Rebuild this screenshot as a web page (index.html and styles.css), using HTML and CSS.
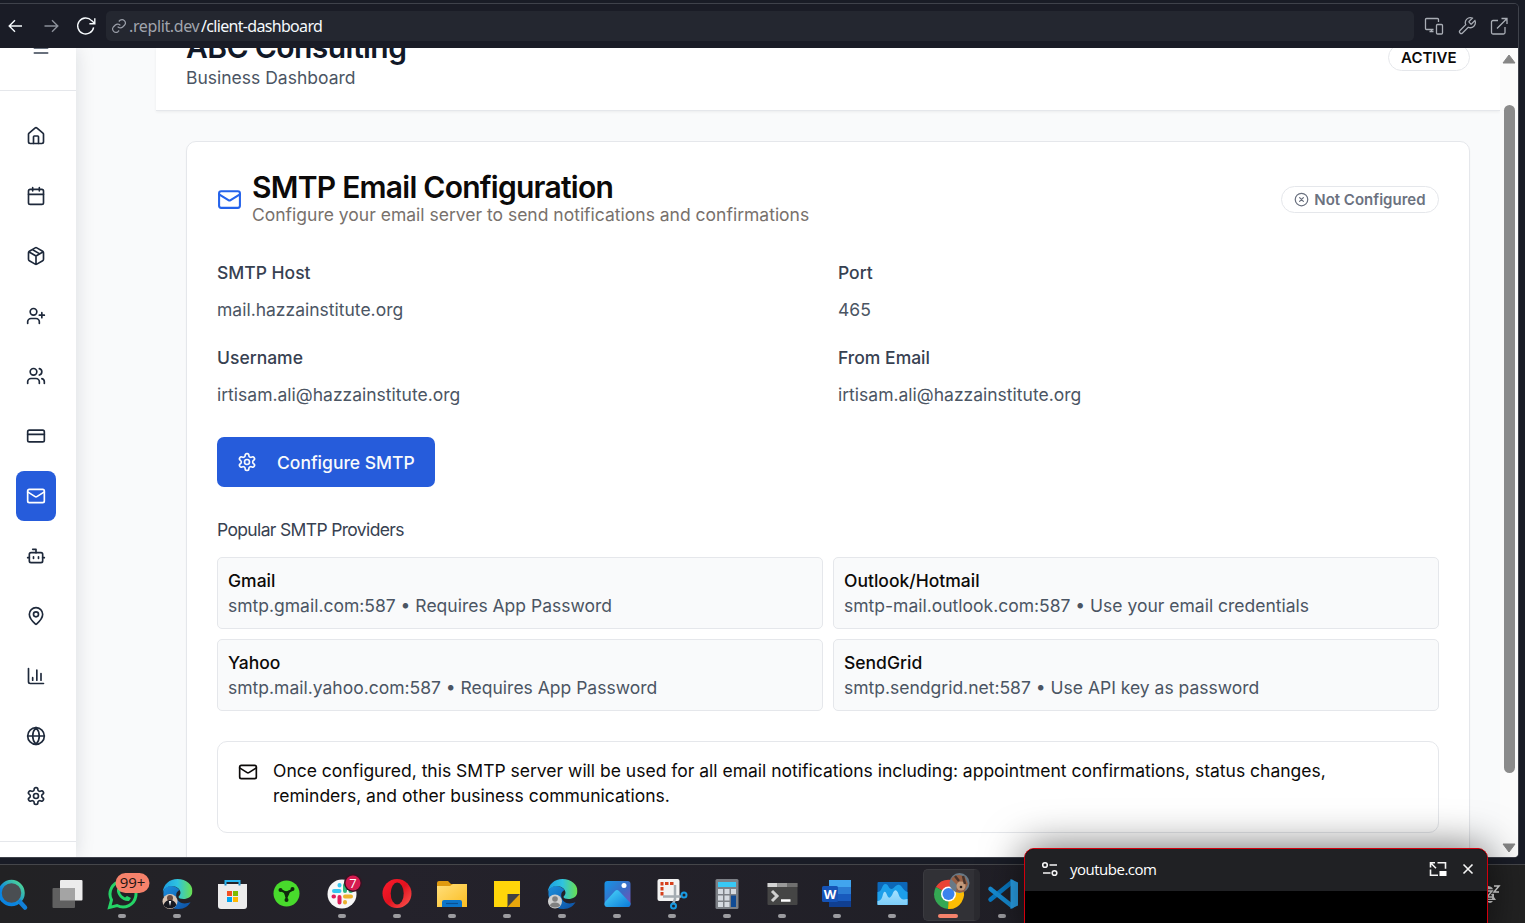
FILE: index.html
```
<!DOCTYPE html>
<html lang="en">
<head>
<meta charset="utf-8">
<title>Client Dashboard</title>
<link rel="stylesheet" href="styles.css">
</head>
<body>
<svg class="sprite" aria-hidden="true">
  <symbol id="mail" viewBox="0 0 24 24"><rect x="2" y="4" width="20" height="16" rx="2"/><path d="m22 7-8.97 5.7a1.94 1.94 0 0 1-2.06 0L2 7"/></symbol>
  <symbol id="cog" viewBox="0 0 24 24"><path d="M12.22 2h-.44a2 2 0 0 0-2 2v.18a2 2 0 0 1-1 1.73l-.43.25a2 2 0 0 1-2 0l-.15-.08a2 2 0 0 0-2.73.73l-.22.38a2 2 0 0 0 .73 2.73l.15.1a2 2 0 0 1 1 1.72v.51a2 2 0 0 1-1 1.74l-.15.09a2 2 0 0 0-.73 2.73l.22.38a2 2 0 0 0 2.73.73l.15-.08a2 2 0 0 1 2 0l.43.25a2 2 0 0 1 1 1.73V20a2 2 0 0 0 2 2h.44a2 2 0 0 0 2-2v-.18a2 2 0 0 1 1-1.73l.43-.25a2 2 0 0 1 2 0l.15.08a2 2 0 0 0 2.73-.73l.22-.39a2 2 0 0 0-.73-2.73l-.15-.08a2 2 0 0 1-1-1.74v-.5a2 2 0 0 1 1-1.74l.15-.09a2 2 0 0 0 .73-2.73l-.22-.38a2 2 0 0 0-2.73-.73l-.15.08a2 2 0 0 1-2 0l-.43-.25a2 2 0 0 1-1-1.73V4a2 2 0 0 0-2-2z"/><circle cx="12" cy="12" r="3"/></symbol>
  <linearGradient id="edgeA" x1="0" y1="0" x2="1" y2="0"><stop offset="0" stop-color="#1b9de2"/><stop offset=".5" stop-color="#2fc3e0"/><stop offset="1" stop-color="#6be04c"/></linearGradient>
  <linearGradient id="edgeB" x1="0" y1="0" x2="1" y2="1"><stop offset="0" stop-color="#1c8fdc"/><stop offset="1" stop-color="#0c4fa3"/></linearGradient>
  <linearGradient id="folder" x1="0" y1="0" x2="1" y2="1"><stop offset="0" stop-color="#ffdf7c"/><stop offset="1" stop-color="#fbbd20"/></linearGradient>
  <linearGradient id="photo" x1="0" y1="0" x2="1" y2="1"><stop offset="0" stop-color="#1495e8"/><stop offset=".55" stop-color="#3d6bc4"/><stop offset="1" stop-color="#7f4fb5"/></linearGradient>
  <linearGradient id="peak" x1="0" y1="0" x2="1" y2="1"><stop offset="0" stop-color="#4cd8fb"/><stop offset="1" stop-color="#0b7ad8"/></linearGradient>
  <linearGradient id="search" x1="0" y1="1" x2="1" y2="0"><stop offset=".35" stop-color="#0a84e0"/><stop offset="1" stop-color="#56e08e"/></linearGradient>
  <linearGradient id="opera" x1="0" y1="0" x2="1" y2="1"><stop offset="0" stop-color="#ff1b2d"/><stop offset=".5" stop-color="#e0121f"/><stop offset="1" stop-color="#ff5a52"/></linearGradient>
  <linearGradient id="wave" x1="0" y1="0" x2="0" y2="1"><stop offset="0" stop-color="#a5e1ff"/><stop offset="1" stop-color="#7ccdf8"/></linearGradient>
  <symbol id="edge" viewBox="0 0 30 30"><path fill="url(#edgeB)" d="M1 12C0 22 6 30 16 30c6 0 10-3 12-7-8 4-16-1-14-9 1-2 3-3 3-3C12 5 3 6 1 12z"/><path fill="url(#edgeA)" d="M0 14C1 5 7 0 15 0c9 0 15 6 15 12 0 6-5 8-9 8-3 0-5-1-5-2s2-2 2-4c0-4-4-7-9-7-4 0-8 3-9 7z"/></symbol>
</svg>

<div class="browser">
  <div class="toolbar">
    <svg class="ti back" viewBox="0 0 20 20"><path d="M16 10H3.5M9 4.2 3.2 10 9 15.8"/></svg>
    <svg class="ti fwd" viewBox="0 0 20 20"><path d="M3.5 10H16M11 4.2 16.8 10 11 15.8"/></svg>
    <svg class="ti reload" viewBox="0 0 20 20"><path d="M17.6 11.3A8 8 0 1 1 15.6 4.6L18.8 7.6M18.8 2.2v5.6h-5.4"/></svg>
    <div class="address">
      <svg class="link" viewBox="0 0 24 24"><path d="M10 13a5 5 0 0 0 7.5.5l3-3a5 5 0 0 0-7-7l-1.8 1.7"/><path d="M14 11a5 5 0 0 0-7.5-.5l-3 3a5 5 0 0 0 7 7l1.7-1.7"/></svg>
      <span class="host">.replit.dev</span><span class="path">/client-dashboard</span>
    </div>
    <div class="tools">
      <svg viewBox="0 0 20 20"><path d="M9.5 13.5H2.5a1 1 0 0 1-1-1v-9a1 1 0 0 1 1-1h11a1 1 0 0 1 1 1V6M5.5 15.5h4M7.5 13.5v2"/><rect x="12.5" y="8.500" width="6" height="9.5" rx="1"/></svg>
      <svg viewBox="0 0 24 24" class="wrench"><path d="M14.7 6.300a1 1 0 0 0 0 1.400l1.600 1.600a1 1 0 0 0 1.400 0l3.770-3.770a6 6 0 0 1-7.940 7.940l-6.910 6.910a2.120 2.120 0 0 1-3-3l6.910-6.910a6 6 0 0 1 7.940-7.940l-3.760 3.760z"/></svg>
      <svg viewBox="0 0 20 20"><path d="M9 4.5H4A1.5 1.5 0 0 0 2.5 6v10.5A1.5 1.5 0 0 0 4 18h10.5a1.5 1.5 0 0 0 1.5-1.500V11M12.5 2.5H18V8M8 12.5 18 2.500"/></svg>
    </div>
  </div>

  <div class="viewport">
    <nav class="sidebar">
      <div class="menu"><svg class="icon" viewBox="0 0 24 24"><path d="M4 6h16M4 12h16M4 18h16"/></svg></div>
      <div class="links">
        <a class="nav"><svg class="icon" viewBox="0 0 24 24"><path d="M15 21v-8a1 1 0 0 0-1-1h-4a1 1 0 0 0-1 1v8"/><path d="M3 10a2 2 0 0 1 .709-1.528l7-5.999a2 2 0 0 1 2.582 0l7 5.999A2 2 0 0 1 21 10v9a2 2 0 0 1-2 2H5a2 2 0 0 1-2-2z"/></svg></a>
        <a class="nav"><svg class="icon" viewBox="0 0 24 24"><path d="M8 2v4M16 2v4M3 10h18"/><rect x="3" y="4" width="18" height="18" rx="2"/></svg></a>
        <a class="nav"><svg class="icon" viewBox="0 0 24 24"><path d="m7.5 4.27 9 5.15M21 8a2 2 0 0 0-1-1.73l-7-4a2 2 0 0 0-2 0l-7 4A2 2 0 0 0 3 8v8a2 2 0 0 0 1 1.73l7 4a2 2 0 0 0 2 0l7-4A2 2 0 0 0 21 16ZM3.3 7l8.700 5 8.700-5M12 22V12"/></svg></a>
        <a class="nav"><svg class="icon" viewBox="0 0 24 24"><path d="M16 21v-2a4 4 0 0 0-4-4H6a4 4 0 0 0-4 4v2M19 8v6M22 11h-6"/><circle cx="9" cy="7" r="4"/></svg></a>
        <a class="nav"><svg class="icon" viewBox="0 0 24 24"><path d="M16 21v-2a4 4 0 0 0-4-4H6a4 4 0 0 0-4 4v2M22 21v-2a4 4 0 0 0-3-3.87M16 3.13a4 4 0 0 1 0 7.75"/><circle cx="9" cy="7" r="4"/></svg></a>
        <a class="nav"><svg class="icon" viewBox="0 0 24 24"><rect x="2" y="5" width="20" height="14" rx="2"/><path d="M2 10h20"/></svg></a>
        <a class="nav active"><svg class="icon"><use href="#mail"/></svg></a>
        <a class="nav"><svg class="icon" viewBox="0 0 24 24"><path d="M12 8V4H8M2 14h2M20 14h2M15 13v2M9 13v2"/><rect x="4" y="8" width="16" height="12" rx="2"/></svg></a>
        <a class="nav"><svg class="icon" viewBox="0 0 24 24"><path d="M20 10c0 4.993-5.539 10.193-7.399 11.799a1 1 0 0 1-1.202 0C9.539 20.193 4 14.993 4 10a8 8 0 0 1 16 0"/><circle cx="12" cy="10" r="3"/></svg></a>
        <a class="nav"><svg class="icon" viewBox="0 0 24 24"><path d="M3 3v16a2 2 0 0 0 2 2h16M18 17V9M13 17V5M8 17v-3"/></svg></a>
        <a class="nav"><svg class="icon" viewBox="0 0 24 24"><circle cx="12" cy="12" r="10"/><path d="M12 2a14.5 14.5 0 0 0 0 20 14.5 14.5 0 0 0 0-20M2 12h20"/></svg></a>
        <a class="nav"><svg class="icon"><use href="#cog"/></svg></a>
      </div>
      <div class="sidefoot"></div>
    </nav>

    <main class="main">
      <header class="pagehead">
        <div>
          <h1>ABC Consulting</h1>
          <p>Business Dashboard</p>
        </div>
        <span class="badge">ACTIVE</span>
      </header>
      <section class="card">
        <div class="cardhead">
          <svg class="icon big"><use href="#mail"/></svg>
          <div class="titles">
            <h2>SMTP Email Configuration</h2>
            <p><span>Configure your email server to send notifications and confirmations</span></p>
          </div>
          <span class="badge muted"><svg class="icon" viewBox="0 0 24 24"><circle cx="12" cy="12" r="10"/><path d="m15 9-6 6M9 9l6 6"/></svg>Not Configured</span>
        </div>
        <div class="fields">
          <div class="field"><b>SMTP Host</b><span>mail.hazzainstitute.org</span></div>
          <div class="field"><b>Port</b><span>465</span></div>
          <div class="field"><b>Username</b><span>irtisam.ali@hazzainstitute.org</span></div>
          <div class="field"><b>From Email</b><span>irtisam.ali@hazzainstitute.org</span></div>
        </div>
        <button class="primary"><svg class="icon"><use href="#cog"/></svg>Configure SMTP</button>
        <h4>Popular SMTP Providers</h4>
        <div class="providers">
          <div class="provider"><b>Gmail</b><span>smtp.gmail.com:587 • Requires App Password</span></div>
          <div class="provider"><b>Outlook/Hotmail</b><span>smtp-mail.outlook.com:587 • Use your email credentials</span></div>
          <div class="provider"><b>Yahoo</b><span>smtp.mail.yahoo.com:587 • Requires App Password</span></div>
          <div class="provider"><b>SendGrid</b><span>smtp.sendgrid.net:587 • Use API key as password</span></div>
        </div>
        <div class="note">
          <svg class="icon"><use href="#mail"/></svg>
          <p>Once configured, this SMTP server will be used for all email notifications including: appointment confirmations, status changes,<br>reminders, and other business communications.</p>
        </div>
      </section>
    </main>

    <div class="scrollbar">
      <svg viewBox="0 0 14 10"><path d="M7 1 13 9H1z"/></svg>
      <div class="thumb"></div>
      <svg viewBox="0 0 14 10"><path d="M7 9 13 1H1z"/></svg>
    </div>
  </div>
</div>

<div class="taskbar">
  <div class="task"><svg viewBox="0 0 55 58"><circle cx="26.5" cy="28" r="11.5" fill="#4a4e52" stroke="url(#search)" stroke-width="3.5"/><path d="m35 37 5 5.5" stroke="#1280d8" stroke-width="4.5" stroke-linecap="round"/></svg></div>
  <div class="task"><svg viewBox="0 0 55 58"><rect x="20" y="15" width="22.5" height="20.5" rx="1" fill="#ececec"/><rect x="12.5" y="23" width="22.5" height="20" rx="1" fill="#606060"/><path d="M20 23h15v12.500H20z" fill="#a4a4a4"/></svg></div>
  <div class="task run"><svg viewBox="0 0 55 58"><path d="M14.5 42.5l2-7.500A13 13 0 1 1 22 40.500z" fill="none" stroke="#25d366" stroke-width="3"/><path d="M22 24c-1 6 6 13 12 12l2-3-4-2-2 1.500c-2-1-4-3-5-5l1.500-2-2-4z" fill="#25d366"/><rect x="20.5" y="8" width="34" height="20" rx="10" fill="#f5826b"/><text x="37.5" y="23" class="count">99+</text></svg></div>
  <div class="task run"><svg viewBox="0 0 55 58"><use href="#edge" x="12.5" y="14" width="30" height="30"/><circle cx="20" cy="36.5" r="7.5" fill="#d8c5b5"/><circle cx="20" cy="33" r="3" fill="#694b40"/><path d="M13.500 40q2-5 6.500-5t6.500 5a8 8 0 0 1-13 0z" fill="#171920"/><path d="m18.800 36 1.200 5 1.200-5z" fill="#fff"/></svg></div>
  <div class="task"><svg viewBox="0 0 55 58"><path d="M20.5 21v-5h14v5" fill="none" stroke="#29b5ee" stroke-width="2"/><path d="M13 19h29v22a3 3 0 0 1-3 3H16a3 3 0 0 1-3-3z" fill="#ececec"/><path d="M20.500 19v1.500M34.500 19v1.500" stroke="#1c8fd0" stroke-width="2"/><path d="M22 26h5v5h-5z" fill="#f25022"/><path d="M28 26h5v5h-5z" fill="#7fba00"/><path d="M22 32h5v5h-5z" fill="#00a4ef"/><path d="M28 32h5v5h-5z" fill="#ffb900"/></svg></div>
  <div class="task"><svg viewBox="0 0 55 58"><circle cx="26.5" cy="28.5" r="13" fill="#48db2c"/><path d="m20.5 25 6 3 6.500-3.500M26.500 28v7" fill="none" stroke="#102a0c" stroke-width="2"/><path d="M23 25.500q3.500 1.500 7.500-.5l-1.500 4.500-1.500 3h-2l-1-3z" fill="#102a0c"/><circle cx="20.5" cy="25" r="2" fill="#102a0c"/><circle cx="32.500" cy="24" r="2" fill="#102a0c"/><circle cx="26.500" cy="35" r="2" fill="#102a0c"/></svg></div>
  <div class="task run"><svg viewBox="0 0 55 58"><circle cx="27" cy="29" r="14.5" fill="#f7f7f7"/><g stroke-width="4" stroke-linecap="round"><path d="M19 26h5.500M24.500 20v.5" stroke="#36c5f0"/><path d="M30 26v-6M35.500 26h.5" stroke="#2eb67d"/><path d="M30 31.500h6M30 37v.5" stroke="#ecb22e"/><path d="M24.500 32v5.500M18.500 31.500h.5" stroke="#e01e5a"/></g><circle cx="38" cy="18" r="9" fill="#3a1222"/><circle cx="38" cy="18" r="7.500" fill="#d51b50"/><text x="38" y="22.500" class="seven">7</text></svg></div>
  <div class="task run"><svg viewBox="0 0 55 58"><ellipse cx="27" cy="28.5" rx="14.5" ry="14.5" fill="url(#opera)"/><ellipse cx="27.2" cy="28.5" rx="6.5" ry="11" fill="#222126"/></svg></div>
  <div class="task run"><svg viewBox="0 0 55 58"><path d="M12 18a2 2 0 0 1 2-2h9l3 3h14a2 2 0 0 1 2 2v5H12z" fill="#e09a0f"/><path d="M12 21h13l3-2h14v23H12z" fill="url(#folder)"/><path d="M17 42v-5a2 2 0 0 1 2-2h16a2 2 0 0 1 2 2v5z" fill="#0c75ca"/><path d="M21 38.5h12" stroke="#0a4f91" stroke-width="1.2"/></svg></div>
  <div class="task run"><svg viewBox="0 0 55 58"><path d="M14 16h26v13L27 42H14z" fill="#ffd60a"/><path d="M27.5 29H40L27.500 42z" fill="#414043"/><path d="M40 29v13H27.500z" fill="#e8a60c"/></svg></div>
  <div class="task run"><svg viewBox="0 0 55 58"><use href="#edge" x="12.5" y="14" width="30" height="30"/><circle cx="20" cy="36.5" r="7" fill="#cfcfcf"/><circle cx="20" cy="34" r="2.8" fill="#808080"/><path d="M15 41q0-3.500 5-3.500t5 3.500q-5 3-10 0z" fill="#808080"/></svg></div>
  <div class="task run"><svg viewBox="0 0 55 58"><rect x="14.5" y="16" width="26" height="26" rx="3" fill="url(#photo)"/><circle cx="34" cy="20.5" r="2.5" fill="#fff"/><path d="M15 37 25 26q2-2 4 0l11.500 12v1a3 3 0 0 1-3 3h-20a3 3 0 0 1-3-3z" fill="url(#peak)"/></svg></div>
  <div class="task run"><svg viewBox="0 0 55 58"><rect x="12.5" y="14" width="22" height="22" rx="2" fill="#f3f3f3"/><path d="M17 30.500V18.500h12" fill="none" stroke="#d6401c" stroke-width="3" stroke-dasharray="3.500 1.500"/><path d="M30 20v14l-2 5M18 31.500h18" fill="none" stroke="#a5acb2" stroke-width="2.500"/><circle cx="28.5" cy="41" r="2.500" fill="none" stroke="#189be2" stroke-width="2"/><circle cx="39" cy="30" r="2.500" fill="none" stroke="#189be2" stroke-width="2"/></svg></div>
  <div class="task run"><svg viewBox="0 0 55 58"><rect x="15.5" y="14" width="23" height="30" rx="1.5" fill="#7c8086"/><path d="M18 17h18v5H18z" fill="#38c9f5"/><path d="M18 24h5v5h-5zM24.500 24h5v5h-5zM31 24h5v5h-5zM18 30.500h5v5h-5zM24.500 30.500h5v5h-5zM18 37h5v5h-5zM24.500 37h5v5h-5z" fill="#d5dae0"/><path d="M31 30.500h5V42h-5z" fill="#104b94"/></svg></div>
  <div class="task run"><svg viewBox="0 0 55 58"><rect x="12.5" y="18" width="30" height="22" rx="1" fill="#454545"/><path d="M12.500 18h10v4h-10z" fill="#d4d4d4"/><path d="M22.500 18h10v4h-10z" fill="#9a9a9a"/><path d="M32.500 18h10v4h-10z" fill="#707070"/><path d="m17 26 5 5-5 5" fill="none" stroke="#d0d0d0" stroke-width="3"/><path d="M26 35.500h9.500" stroke="#fff" stroke-width="2.500"/></svg></div>
  <div class="task run"><svg viewBox="0 0 55 58"><path d="M19 15h22v7H19z" fill="#41a5ee"/><path d="M19 22h22v7H19z" fill="#2b7cd3"/><path d="M19 29h22v7H19z" fill="#185abd"/><path d="M19 36h22v6H19z" fill="#103f91"/><rect x="12" y="21" width="16" height="16" rx="1.5" fill="#1553b6"/><text x="20" y="33.500" class="word">W</text></svg></div>
  <div class="task run"><svg viewBox="0 0 55 58"><rect x="12.5" y="17" width="30" height="23" rx="1" fill="#0c67b8"/><path d="M12.500 27c5 0 4-8 8-8 3 0 3 5 6 5s4-5 8-4c3 1 3 5 8 7v13h-30z" fill="#1c9fea"/><path d="M12.500 36c2 0 4-1 5-5 1.500-6 3-5 5 0 2 4 4 0 5-2 2-5 4-5 6 0 2 6 5 6 9 5v5a1 1 0 0 1-1 1h-28a1 1 0 0 1-1-1z" fill="url(#wave)"/></svg></div>
  <div class="task chrome"><svg viewBox="0 0 55 58"><path d="M28.500 29 15.900 22A14.800 14.800 0 0 1 42 23z" fill="#ea4335"/><path d="M28.500 29 42 22A14.800 14.800 0 0 1 28 44z" fill="#fbbc04"/><path d="M28.500 29 28 44A14.800 14.800 0 0 1 15.900 22z" fill="#34a853"/><circle cx="28.500" cy="29" r="7.500" fill="#fff"/><circle cx="28.500" cy="29" r="6" fill="#3b83ed"/><circle cx="39.500" cy="18" r="10" fill="#687986"/><path d="M31 14q6-7 14-2l3 7-4 8-8 0 1-7z" fill="#986044"/><circle cx="41" cy="21" r="4.500" fill="#c39a7b"/><path d="m35 11 4 5M43 11l2 8" stroke="#48342c" stroke-width="2.500"/><circle cx="41" cy="22" r="1.300" fill="#241b1a"/></svg></div>
  <div class="task run"><svg viewBox="0 0 55 58"><path d="M15.500 34.500 37 17" stroke="#0877c0" stroke-width="4.500" stroke-linecap="round"/><path d="M15.500 24 37 41" stroke="#168bd2" stroke-width="4.500" stroke-linecap="round"/><path d="m35.500 14 7.500 3.500v23L35.500 44z" fill="#2aa3ec"/></svg></div>
  <svg class="bell" viewBox="0 0 20 22"><path d="M2 15V9q0-6 5-6t6 6v5l2 3H1zM6 18h6q-3 4-6 0z" fill="#ddd"/><path d="M13 3h5l-5 6h5M6 8h5l-5 6h5" fill="none" stroke="#242424" stroke-width="3.500"/><path d="M13 3h5l-5 6h5M6 8h5l-5 6h5" fill="none" stroke="#e6e6e6" stroke-width="1.500"/></svg>
</div>

<div class="popup">
  <div class="popbar">
    <svg class="tune" viewBox="0 0 18 16"><circle cx="4" cy="4" r="2.3"/><path d="M8.500 4H16M2 12h7.500"/><circle cx="13.500" cy="12" r="2.3"/></svg>
    <span>youtube.com</span>
    <svg class="pip" viewBox="0 0 18 16"><path d="M8.500 1.700h8v6M9 14.300H1.500V8.500M1.500 6.500V1.700h4.500M2 2.200l5 5"/><path d="M10.500 10h7v5h-7z" fill="#fff" stroke="none"/></svg>
    <svg class="close" viewBox="0 0 12 12"><path d="m1.500 1.500 9 9M10.500 1.500l-9 9"/></svg>
  </div>
</div>
</body>
</html>
```
FILE: styles.css
```
* { box-sizing: border-box; }
body { margin: 0; width: 1525px; height: 923px; overflow: hidden; position: relative; background: #191c26; font-family: Inter, "Liberation Sans", sans-serif; font-size: 17.5px; line-height: 25px; color: #0c0a09; display: flex; flex-direction: column; }
h1, h2, h4, p { margin: 0; }
svg { display: block; flex: none; }
.sprite { position: absolute; width: 0; height: 0; }
.icon { width: 20px; height: 20px; fill: none; stroke: currentColor; stroke-width: 2; stroke-linecap: round; stroke-linejoin: round; }

.browser { margin-top: 3px; width: 1519px; height: 855px; flex: none; border: 1px solid #3f424b; border-left: 0; border-radius: 0 5px 5px 0; display: flex; flex-direction: column; overflow: hidden; }
.toolbar { height: 44px; flex: none; display: flex; align-items: center; background: #1a1c26; color: #f5f9fc; }
.ti, .tools svg, .link { fill: none; stroke: currentColor; stroke-width: 1.4; }
.ti { width: 20px; height: 20px; }
.back { margin-left: 6px; }
.fwd { margin-left: 15px; color: #8b8f99; }
.reload { margin-left: 15px; }
.address { margin-left: 10px; width: 1308px; height: 30px; display: flex; align-items: center; padding-left: 5px; border-radius: 5px; background: #242730; font: 16px/22px "Noto Sans", sans-serif; letter-spacing: -.68px; }
.link { width: 16px; height: 16px; stroke-width: 1.8; color: #9a9ea8; margin-right: 1px; }
.host { color: #a0a4ad; width: 73px; padding-left: 1px; letter-spacing: -.38px; }
.tools { display: flex; gap: 12.5px; margin-left: 10px; color: #a9adb5; }
.tools svg { width: 20px; height: 20px; stroke-width: 1.3; }
.tools .wrench { stroke-width: 1.5; }

.viewport { flex: 1; min-height: 0; display: flex; background: #f9fafb; overflow: hidden; }
.sidebar { width: 76px; flex: none; background: #fff; display: flex; flex-direction: column; box-shadow: 0 0 18px rgba(15, 23, 42, .13); clip-path: inset(0 -30px 0 0); color: #1e293b; }
.menu { height: 43px; border-bottom: 1px solid #e5e7eb; padding: 0 0 0 31px; color: #374151; overflow: hidden; }
.menu svg { margin-top: -10px; }
.links { display: flex; flex-direction: column; gap: 10px; padding: 20px 16px; height: 750px; }
.nav { width: 40px; height: 50px; flex: none; border-radius: 8px; display: grid; place-items: center; }
.active { background: #265cdb; color: #fff; }
.sidefoot { flex: 1; border-top: 1px solid #e5e7eb; }
.main { flex: 1; padding-left: 80px; overflow: hidden; }
.pagehead { height: 63px; background: #fff; border-bottom: 1px solid #e5e7eb; box-shadow: 0 1px 3px rgba(0, 0, 0, .06); display: flex; justify-content: space-between; align-items: flex-start; padding: 0 30px; }
h1 { font-size: 30px; line-height: 36px; font-weight: 600; letter-spacing: -.6px; color: #111827; margin-top: -19px; }
.pagehead p { color: #4b5563; }
.badge { height: 27px; border: 1px solid #e5e7eb; border-radius: 14px; padding: 0 12.500px; display: flex; align-items: center; font-size: 15px; line-height: 20px; font-weight: 600; background: #fff; }
.pagehead .badge { margin-top: -4px; }
.card { margin: 30px 30px 0; height: 900px; border: 1px solid #e5e7eb; border-radius: 10px; background: #fff; padding: 30px; box-shadow: 0 1px 2px rgba(0, 0, 0, .04); }
.cardhead { display: flex; align-items: center; gap: 10px; height: 55px; }
.big { width: 25px; height: 25px; color: #2563eb; }
.titles { flex: 1; }
h2 { font-size: 30px; line-height: 30px; font-weight: 600; letter-spacing: -.75px; }
.titles p { color: #78716c; }
.badge.muted { color: #6b7280; gap: 5px; }
.badge .icon { width: 15px; height: 15px; }
.fields { display: grid; grid-template-columns: 1fr 1fr; gap: 20px; margin-top: 33px; }
.field { height: 65px; display: flex; flex-direction: column; gap: 12px; color: #4b5563; }
.field b { font-weight: 500; color: #374151; }
.provider b { font-weight: 500; color: #0c0a09; }
.primary { margin-top: 27px; height: 50px; width: 218px; border: 0; border-radius: 7px; background: #265cdb; color: #f8fafc; font: 500 17.5px/25px Inter, sans-serif; display: flex; align-items: center; gap: 20px; padding: 0 20px; white-space: nowrap; }
h4 { margin-top: 30px; font-size: 17.5px; line-height: 25px; font-weight: 400; letter-spacing: -.65px; color: #374151; }
.providers { margin-top: 15px; display: grid; grid-template-columns: 1fr 1fr; gap: 10px; }
.provider { height: 72px; padding: 10px; display: flex; flex-direction: column; border: 1px solid #e5e7eb; border-radius: 5px; background: #f9fafb; color: #4b5563; }
.note { margin-top: 30px; height: 92px; border: 1px solid #e5e7eb; border-radius: 10px; padding: 16px 20px; display: flex; gap: 15px; }
.note .icon { margin-top: 4px; }
.note p { white-space: nowrap; }
.scrollbar { width: 18px; flex: none; background: #fbfbfb; display: flex; flex-direction: column; align-items: center; padding: 6px 0 4px; }
.scrollbar svg { width: 14px; height: 10px; fill: #858585; stroke: #858585; stroke-linejoin: round; }
.thumb { width: 11px; height: 668px; border-radius: 6px; background: #8b8b8b; margin: 41px 0 auto; }

.taskbar { margin-top: 6px; height: 59px; border-top: 1px solid #45464a; background: linear-gradient(90deg, #222224, #24222b 25%, #201f26 70%, #222); display: flex; }
.task { width: 55px; height: 58px; flex: none; position: relative; }
.task:first-child { margin-left: -15.5px; }
.task svg { width: 55px; height: 58px; overflow: visible; fill: none; }
.run::after, .chrome::after { content: ""; position: absolute; left: 23.5px; top: 49px; width: 8px; height: 4px; border-radius: 2px; background: #9b9b9f; }
.chrome { z-index: 0; }
.chrome::before { content: ""; position: absolute; z-index: -1; left: 3.500px; top: 4px; width: 50px; height: 50px; border-radius: 5px; background: #313136; border: 1px solid #3b3b40; border-right: 6px solid #2b2b30; }
.chrome::after { left: 18.500px; width: 20px; background: #f5826b; }
.count { font: 15px "Open Sans", sans-serif; fill: #241512; text-anchor: middle; }
.seven { font: 13px "Open Sans", sans-serif; fill: #fff; text-anchor: middle; }
.word { font: 700 13px "Open Sans", sans-serif; fill: #fff; text-anchor: middle; }
.bell { width: 20px; height: 22px; margin: 18px 0 0 451px; }

.popup { position: absolute; left: 1024px; top: 848px; width: 464px; height: 90px; border: 1px solid #d2000d; border-radius: 10px 10px 0 0; background: #000; overflow: hidden; box-shadow: 0 0 42px rgba(0, 0, 0, .6); }
.popbar { height: 42px; background: #202124; color: #fff; display: flex; align-items: center; padding: 0 13px 2px 16px; font: 15px/20px "Open Sans", sans-serif; letter-spacing: -.5px; }
.popbar span { margin: -1px auto 0 11px; }
.popbar svg { fill: none; stroke: #f4f4f4; stroke-width: 1.6; }
.tune, .pip { width: 18px; height: 16px; }
.close { width: 12px; height: 12px; margin-left: 15px; }
```
